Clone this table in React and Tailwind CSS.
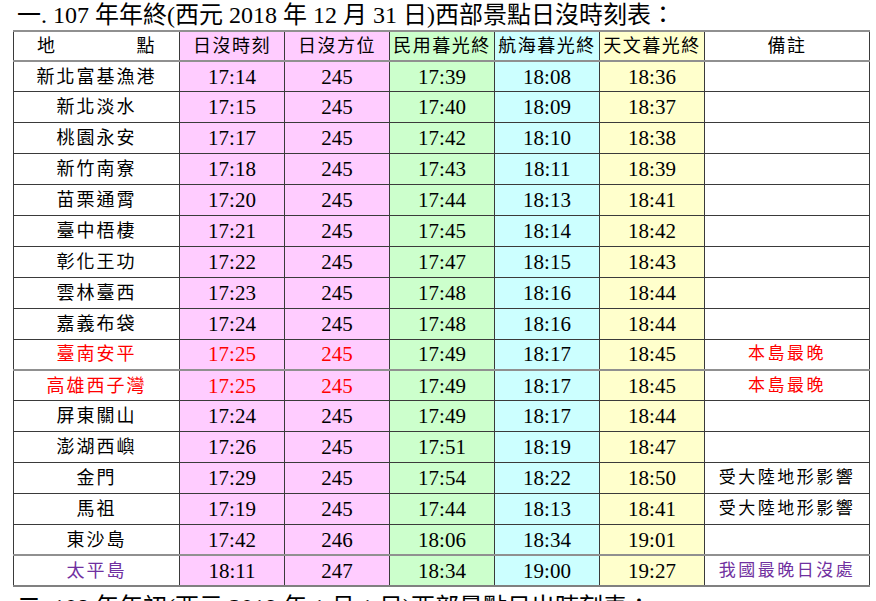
import React from "react";

const rows = [
  ["新北富基漁港", "17:14", "245", "17:39", "18:08", "18:36", "", ""],
  ["新北淡水", "17:15", "245", "17:40", "18:09", "18:37", "", ""],
  ["桃園永安", "17:17", "245", "17:42", "18:10", "18:38", "", ""],
  ["新竹南寮", "17:18", "245", "17:43", "18:11", "18:39", "", ""],
  ["苗栗通霄", "17:20", "245", "17:44", "18:13", "18:41", "", ""],
  ["臺中梧棲", "17:21", "245", "17:45", "18:14", "18:42", "", ""],
  ["彰化王功", "17:22", "245", "17:47", "18:15", "18:43", "", ""],
  ["雲林臺西", "17:23", "245", "17:48", "18:16", "18:44", "", ""],
  ["嘉義布袋", "17:24", "245", "17:48", "18:16", "18:44", "", ""],
  ["臺南安平", "17:25", "245", "17:49", "18:17", "18:45", "本島最晚", "red"],
  ["高雄西子灣", "17:25", "245", "17:49", "18:17", "18:45", "本島最晚", "red"],
  ["屏東關山", "17:24", "245", "17:49", "18:17", "18:44", "", ""],
  ["澎湖西嶼", "17:26", "245", "17:51", "18:19", "18:47", "", ""],
  ["金門", "17:29", "245", "17:54", "18:22", "18:50", "受大陸地形影響", ""],
  ["馬祖", "17:19", "245", "17:44", "18:13", "18:41", "受大陸地形影響", ""],
  ["東沙島", "17:42", "246", "18:06", "18:34", "19:01", "", ""],
  ["太平島", "18:11", "247", "18:34", "19:00", "19:27", "我國最晚日沒處", "purple"],
];

const grayTop = new Set([10, 16]);

const font = { fontFamily: '"Liberation Serif", "Noto Sans CJK TC", serif' };

const th =
  "border border-[#3a3a3a] border-t-2 border-t-[#909090] border-b-2 border-b-[#909090] font-normal p-0 leading-[20px] whitespace-nowrap";

export default function App() {
  return (
    <div className="w-[876px] h-[601px] overflow-hidden bg-white text-black" style={font}>
      <div className="h-[30px] pl-[17px] text-[24px] leading-[30px] whitespace-nowrap">
        一. 107 年年終(西元 2018 年 12 月 31 日)西部景點日沒時刻表：
      </div>
      <table className="ml-[13px] w-[856px] table-fixed border-collapse">
        <colgroup>
          <col className="w-[166px]" />
          <col className="w-[105px]" />
          <col className="w-[105px]" />
          <col className="w-[105px]" />
          <col className="w-[105px]" />
          <col className="w-[105px]" />
          <col className="w-[165px]" />
        </colgroup>
        <thead>
          <tr className="h-[30px] text-[18px] tracking-[1.5px]">
            <th className={th}>
              <div className="flex justify-between px-[23px]">
                <span>地</span>
                <span>點</span>
              </div>
            </th>
            <th className={`${th} bg-[#ffccff]`}>日沒時刻</th>
            <th className={`${th} bg-[#ffccff]`}>日沒方位</th>
            <th className={`${th} bg-[#ccffcc]`}>民用暮光終</th>
            <th className={`${th} bg-[#ccffff]`}>航海暮光終</th>
            <th className={`${th} bg-[#ffffcc]`}>天文暮光終</th>
            <th className={th}>備註</th>
          </tr>
        </thead>
        <tbody>
          {rows.map((r, i) => {
            const hl = r[7];
            const nameCls = hl === "red" ? "text-[#ff0000]" : hl === "purple" ? "text-[#7030a0]" : "";
            const numCls = hl === "red" ? "text-[#ff0000]" : "";
            const topCls = grayTop.has(i) ? "border-t-2 border-t-[#909090]" : "";
            const botCls = i === rows.length - 1 ? "border-b-2 border-b-[#808080]" : "";
            const base = `border border-[#3a3a3a] p-0 text-center leading-[22px] ${topCls} ${botCls}`;
            return (
              <tr key={i} className="h-[30.9px]">
                <td className={`${base} text-[18px] tracking-[2px] ${nameCls}`}>{r[0]}</td>
                <td className={`${base} bg-[#ffccff] text-[21px] ${numCls}`}>{r[1]}</td>
                <td className={`${base} bg-[#ffccff] text-[21px] ${numCls}`}>{r[2]}</td>
                <td className={`${base} bg-[#ccffcc] text-[21px]`}>{r[3]}</td>
                <td className={`${base} bg-[#ccffff] text-[21px]`}>{r[4]}</td>
                <td className={`${base} bg-[#ffffcc] text-[21px]`}>{r[5]}</td>
                <td className={`${base} text-[17px] tracking-[2.5px] whitespace-nowrap ${nameCls}`}>{r[6]}</td>
              </tr>
            );
          })}
        </tbody>
      </table>
      <div className="mt-[5px] h-[30px] pl-[17px] text-[24px] leading-[30px] whitespace-nowrap">
        二. 108 年年初(西元 2019 年 1 月 1 日)西部景點日出時刻表：
      </div>
    </div>
  );
}
